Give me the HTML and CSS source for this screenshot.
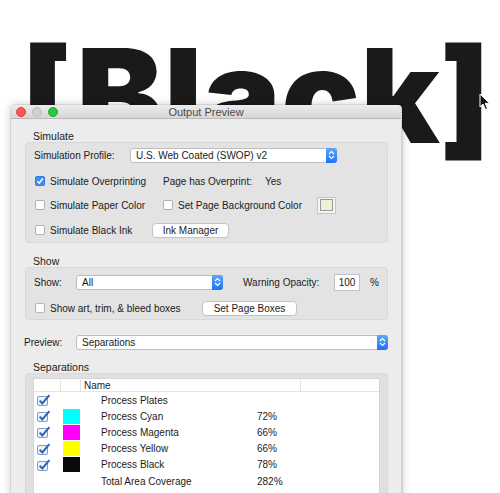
FILE: index.html
```html
<!DOCTYPE html>
<html lang="en">
<head>
    <meta charset="UTF-8">
    <title>Output Preview</title>
    <link rel="stylesheet" href="styles.css">
</head>
<body>
    <div class="desk">
        <div class="headline">[Black]</div>

        <svg class="cursor" width="12" height="18" viewBox="0 0 12 18">
            <path d="M1 1 L1 14 L4 11 L6.5 16.5 L8.5 15.6 L6.2 10.3 L10.5 10.3 Z" fill="#111" stroke="#fff" stroke-width="1"/>
        </svg>

        <div class="window">
            <div class="titlebar">
                <span class="light red"></span>
                <span class="light off"></span>
                <span class="light green"></span>
                <span class="title">Output Preview</span>
            </div>

            <div class="content">
                <div class="legend">Simulate</div>
                <div class="group sim">
                    <div class="row">
                        <span class="lbl profile-lbl">Simulation Profile:</span>
                        <div class="select profile-sel">
                            <span class="sel-text">U.S. Web Coated (SWOP) v2</span>
                            <span class="arrows"><svg width="7" height="10" viewBox="0 0 7 10"><path d="M1 4 L3.5 1.5 L6 4 M1 6 L3.5 8.5 L6 6" fill="none" stroke="#fff" stroke-width="1.2"/></svg></span>
                        </div>
                    </div>
                    <div class="row r2">
                        <span class="cell c1"><span class="cb on"><svg width="8" height="8" viewBox="0 0 8 8"><path d="M1.3 4.2 L3.2 6.2 L6.8 1.5" fill="none" stroke="#fff" stroke-width="1.5"/></svg></span>Simulate Overprinting</span>
                        <span class="overprint-lbl">Page has Overprint:</span>
                        <span>Yes</span>
                    </div>
                    <div class="row r3">
                        <span class="cell c1"><span class="cb"></span>Simulate Paper Color</span>
                        <span class="cell bg-cell"><span class="cb"></span>Set Page Background Color</span>
                        <span class="swatch"><span class="swatch-in"></span></span>
                    </div>
                    <div class="row r4">
                        <span class="cell c1 ink-cell"><span class="cb"></span>Simulate Black Ink</span>
                        <span class="btn ink-btn">Ink Manager</span>
                    </div>
                </div>

                <div class="legend show-legend">Show</div>
                <div class="group show">
                    <div class="row">
                        <span class="lbl show-lbl">Show:</span>
                        <div class="select show-sel">
                            <span class="sel-text">All</span>
                            <span class="arrows"><svg width="7" height="10" viewBox="0 0 7 10"><path d="M1 4 L3.5 1.5 L6 4 M1 6 L3.5 8.5 L6 6" fill="none" stroke="#fff" stroke-width="1.2"/></svg></span>
                        </div>
                        <span class="opacity-lbl">Warning Opacity:</span>
                        <span class="field">100</span>
                        <span class="pct">%</span>
                    </div>
                    <div class="row r2b">
                        <span class="cell c1 boxes-cell"><span class="cb"></span>Show art, trim, &amp; bleed boxes</span>
                        <span class="btn boxes-btn">Set Page Boxes</span>
                    </div>
                </div>

                <div class="row preview-row">
                    <span class="lbl preview-lbl">Preview:</span>
                    <div class="select preview-sel">
                        <span class="sel-text">Separations</span>
                        <span class="arrows"><svg width="7" height="10" viewBox="0 0 7 10"><path d="M1 4 L3.5 1.5 L6 4 M1 6 L3.5 8.5 L6 6" fill="none" stroke="#fff" stroke-width="1.2"/></svg></span>
                    </div>
                </div>

                <div class="legend sep-legend">Separations</div>
                <div class="group sep">
                    <div class="table">
                        <div class="thead">
                            <span class="col-cb"></span>
                            <span class="col-sw"></span>
                            <span class="col-name">Name</span>
                            <span class="col-val"></span>
                        </div>
                        <div class="tbody" id="plates"></div>
                    </div>
                </div>
            </div>
        </div>
    </div>

    <script>
        // filas de la tabla de separaciones
        const plates = [
            { name: 'Process Plates', color: null, value: '', check: true },
            { name: 'Process Cyan', color: '#00ffff', value: '72%', check: true },
            { name: 'Process Magenta', color: '#ff00ff', value: '66%', check: true },
            { name: 'Process Yellow', color: '#ffff00', value: '66%', check: true },
            { name: 'Process Black', color: '#0a0a0a', value: '78%', check: true },
            { name: 'Total Area Coverage', color: null, value: '282%', check: false }
        ];

        const tick = '<svg width="14" height="12" viewBox="0 0 14 12"><rect x="0.5" y="2.5" width="10" height="9" rx="1.5" fill="#eef3fa" stroke="#7f9cc4"/><path d="M2.6 6.6 L5.3 9.4 L12.4 1.2" fill="none" stroke="#2a64b8" stroke-width="2"/></svg>';

        const body = document.getElementById('plates');
        plates.forEach(p => {
            const row = document.createElement('div');
            row.className = 'trow';
            row.innerHTML = `
                <span class="col-cb">${p.check ? tick : ''}</span>
                <span class="col-sw">${p.color ? `<span class="ink" style="background:${p.color}"></span>` : ''}</span>
                <span class="col-name">${p.name}</span>
                <span class="col-val">${p.value}</span>
            `;
            body.appendChild(row);
        });
    </script>
</body>
</html>
```

FILE: styles.css
```css
body {
    margin: 0;
    background: #fff;
    font-family: "Liberation Sans", Arial, sans-serif;
    font-size: 10px;
    color: #1b1b1b;
    overflow: hidden;
}
.desk {
    position: relative;
    width: 500px;
    height: 493px;
    overflow: hidden;
}
.headline {
    font-family: Inter, Lato, sans-serif;
    font-weight: 900;
    font-size: 130px;
    line-height: 1;
    letter-spacing: 0.7px;
    color: #1a1a1a;
    padding: 31px 0 0 21px;
    white-space: nowrap;
}
.cursor {
    position: absolute;
    left: 479px;
    top: 93px;
}

/* ventana */
.window {
    position: absolute;
    left: 11px;
    top: 105px;
    width: 390px;
    height: 400px;
    background: #ececec;
    border-right: 1px dotted #b9b9b9;
    box-shadow: 0 0 10px rgba(0, 0, 0, 0.22), 0 0 0 1px rgba(0, 0, 0, 0.08);
    border-radius: 4px 4px 0 0;
}
.titlebar {
    position: relative;
    height: 13px;
    display: flex;
    align-items: center;
    padding-left: 5px;
    gap: 6px;
    background: linear-gradient(#ececec, #d6d6d6);
    border-bottom: 1px solid #b9b9b9;
    border-radius: 4px 4px 0 0;
}
.light {
    width: 10px;
    height: 10px;
    border-radius: 50%;
    box-sizing: border-box;
}
.red { background: #fc5753; border: 0.5px solid #df3d39; }
.off { background: #d0d0d0; border: 0.5px solid #bdbdbd; }
.green { background: #2ac83f; border: 0.5px solid #1fa831; }
.title {
    position: absolute;
    left: 0;
    right: 0;
    text-align: center;
    font-size: 11px;
    color: #4a4a4a;
}

.content {
    padding: 9px 13px 0 14px;
}
.legend {
    line-height: 12px;
    padding: 2px 0 0 8px;
    font-size: 10.5px;
}
.show-legend { margin-top: 10px; }
.sep-legend { margin-top: 9px; }

.group {
    background: #e3e3e3;
    border: 1px solid #d8d8d8;
    border-radius: 4px;
    padding-left: 8px;
    box-sizing: border-box;
}
.sim {
    height: 101px;
    padding-top: 0;
}
.show {
    height: 53px;
    padding-top: 2px;
}
.row {
    display: flex;
    align-items: center;
    height: 24px;
    white-space: nowrap;
}
.r2 { margin-top: 2px; }
.r4 { margin-top: 1px; }
.r2b { margin-top: 2px; }

.lbl { flex: none; }
.profile-lbl { width: 96px; }
.show-lbl { width: 42px; }
.preview-lbl { width: 52px; }

.select {
    position: relative;
    display: flex;
    align-items: center;
    height: 15px;
    background: #fff;
    border: 1px solid #bdbdbd;
    border-radius: 3px;
    box-sizing: border-box;
}
.sel-text {
    flex: 1;
    padding-left: 5px;
}
.arrows {
    width: 11px;
    height: 15px;
    margin: -1px -1px -1px 0;
    display: flex;
    align-items: center;
    justify-content: center;
    background: linear-gradient(#5aa8fb, #1f72f2);
    border-radius: 0 3px 3px 0;
}
.profile-sel { width: 207px; }
.show-sel { width: 147px; }
.preview-sel { width: 312px; }

.cell {
    display: flex;
    align-items: center;
    flex: none;
}
.c1 { width: 129px; }
.c1 .cb { margin-left: 1px; }
.ink-cell { width: 118px; }
.boxes-cell { width: 168px; }
.bg-cell { width: 154px; }
.cb {
    width: 10px;
    height: 10px;
    margin-right: 5px;
    background: #fff;
    border: 1px solid #b3b3b3;
    border-radius: 2px;
    box-sizing: border-box;
    display: flex;
    align-items: center;
    justify-content: center;
}
.cb.on {
    background: #3b8ff7;
    border-color: #2e7ae6;
}
.overprint-lbl { width: 102px; }

.swatch {
    width: 19px;
    height: 17px;
    background: #f5f5f5;
    border: 1px solid #c6c6c6;
    box-sizing: border-box;
    display: flex;
    align-items: center;
    justify-content: center;
}
.swatch-in {
    width: 11px;
    height: 10px;
    background: #f1efd6;
    border: 1px solid #9a9a9a;
}

.btn {
    height: 15px;
    line-height: 13px;
    background: #fff;
    border: 1px solid #c3c3c3;
    border-radius: 4px;
    box-sizing: border-box;
    text-align: center;
}
.ink-btn { width: 77px; }
.boxes-btn { width: 95px; }

.opacity-lbl {
    margin-left: 20px;
    width: 91px;
}
.field {
    width: 26px;
    height: 17px;
    line-height: 15px;
    background: #fff;
    border: 1px solid #c3c3c3;
    box-sizing: border-box;
    text-align: center;
}
.pct { margin-left: 10px; }

.preview-row {
    margin: 14px 0 0 -1px;
    height: 16px;
}

/* tabla */
.sep {
    height: 140px;
    padding: 4px 7px 0 7px;
    background: #e0e0e0;
}
.table {
    background: #fff;
    height: 130px;
    border: 1px solid #d5d5d5;
    border-bottom: none;
}
.thead, .trow {
    display: flex;
    align-items: center;
}
.thead {
    height: 12px;
    border-bottom: 1px solid #e3e3e3;
}
.thead span {
    height: 11px;
    line-height: 11px;
    border-right: 1px solid #e3e3e3;
    box-sizing: border-box;
}
.thead .col-val { border-right: none; }
.trow { height: 16.2px; }
.col-cb {
    width: 27px;
    flex: none;
    display: flex;
    align-items: center;
    padding-left: 3px;
    box-sizing: border-box;
}
.col-sw {
    width: 20px;
    flex: none;
    display: flex;
    align-items: center;
    padding-left: 2px;
    box-sizing: border-box;
}
.ink {
    width: 17px;
    height: 15px;
}
.col-name {
    width: 176px;
    flex: none;
    padding-left: 20px;
    box-sizing: border-box;
}
.thead .col-name {
    width: 220px;
    padding-left: 3px;
}
.col-val {
    flex: 1;
}
```
